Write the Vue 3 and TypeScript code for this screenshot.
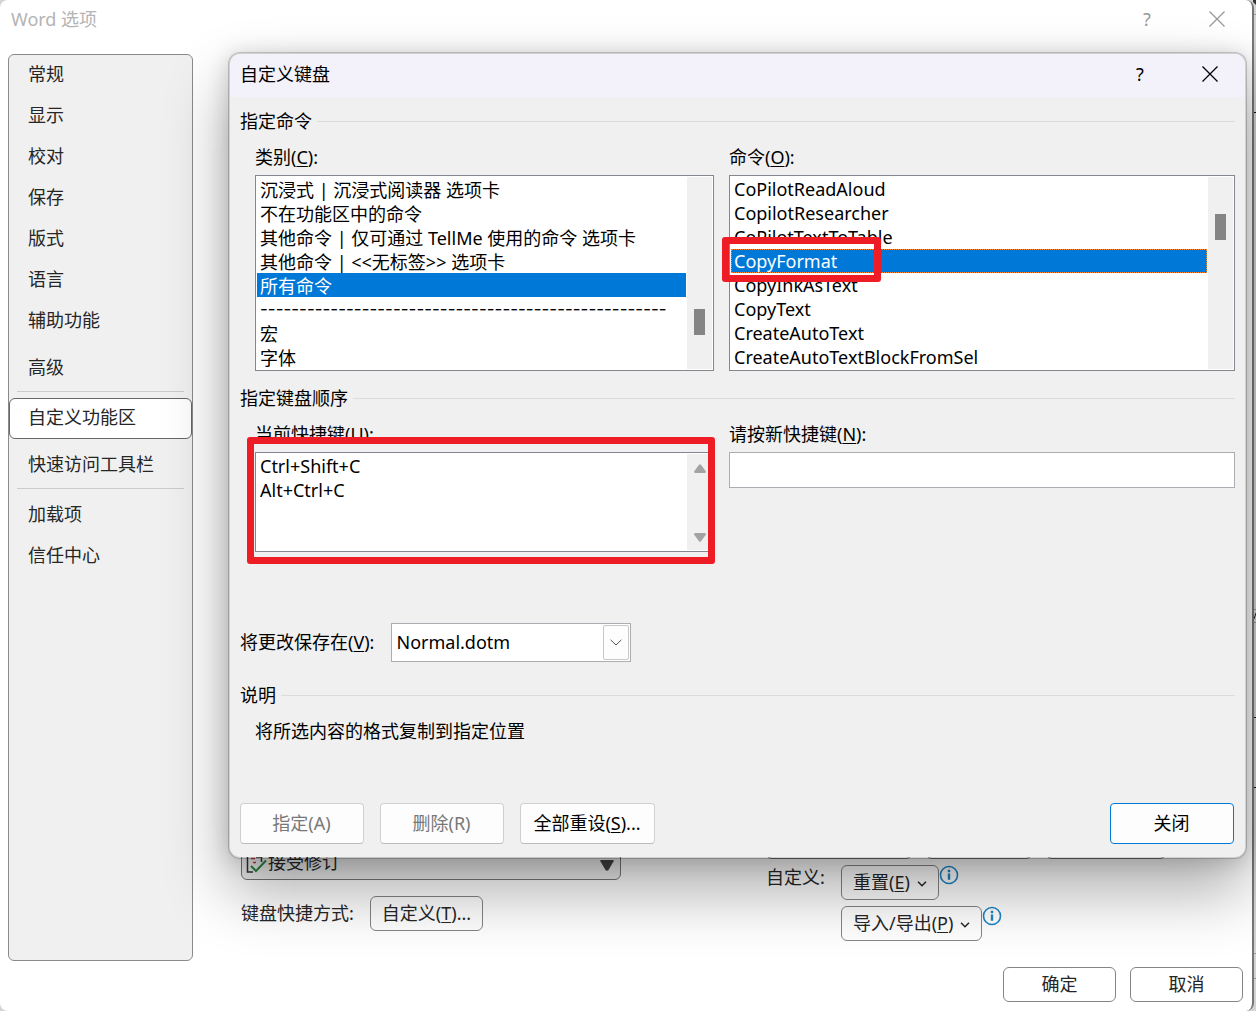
<script setup lang="ts">
import { ref } from 'vue'

interface NavItem {
  label: string
  active?: boolean
}

const navGroups: NavItem[][] = [
  [
    { label: '常规' },
    { label: '显示' },
    { label: '校对' },
    { label: '保存' },
    { label: '版式' },
    { label: '语言' },
    { label: '辅助功能' },
  ],
  [{ label: '高级' }],
  [{ label: '自定义功能区', active: true }],
  [{ label: '快速访问工具栏' }],
  [{ label: '加载项' }, { label: '信任中心' }],
]

const dashes = '-'.repeat(52)
const categories: string[] = [
  '沉浸式 | 沉浸式阅读器 选项卡',
  '不在功能区中的命令',
  '其他命令 | 仅可通过 TellMe 使用的命令 选项卡',
  '其他命令 | <<无标签>> 选项卡',
  '所有命令',
  dashes,
  '宏',
  '字体',
]
const commands: string[] = [
  'CoPilotReadAloud',
  'CopilotResearcher',
  'CoPilotTextToTable',
  'CopyFormat',
  'CopyInkAsText',
  'CopyText',
  'CreateAutoText',
  'CreateAutoTextBlockFromSel',
]
const shortcuts: string[] = ['Ctrl+Shift+C', 'Alt+Ctrl+C']

const category = ref('所有命令')
const command = ref('CopyFormat')
const shortcut = ref('')
const newShortcut = ref('')
const template = ref('Normal.dotm')
</script>

<template>
  <div class="desk">
    <!-- Edge of the document window behind the options window -->
    <svg class="desk-edge" width="3" height="1011" viewBox="0 0 3 1011" aria-hidden="true">
      <path d="M0 0h3v5l-3-3z" fill="#333" />
      <path d="M0 112.5h3M0 717.5h3M0 787.5h3" stroke="#111" />
      <path d="M0 14.500h3M0 609.5h3M0 622.5h3M0 953.5h3M0 978.5h3" stroke="#999" />
      <path d="M1 619l2-6" stroke="#222" />
    </svg>

    <section class="options" aria-label="Word 选项">
      <header class="options-title">
        <h1>Word 选项</h1>
        <button class="caption" type="button" aria-label="帮助">?</button>
        <button class="caption" type="button" aria-label="关闭">
          <svg width="16" height="16" viewBox="0 0 16 16"><path d="M.5.5l15 15M15.5.5l-15 15" /></svg>
        </button>
      </header>

      <div class="options-main">
        <nav class="sidebar">
          <ul v-for="(group, i) in navGroups" :key="i" :class="{ ruled: i === 2 || i === 4 }">
            <li v-for="item in group" :key="item.label">
              <button type="button" :class="{ active: item.active }">{{ item.label }}</button>
            </li>
          </ul>
        </nav>

        <div class="page">
          <div class="page-left">
            <div class="command-row">
              <svg class="accept" width="23" height="28" viewBox="0 0 23 28" fill="none">
                <path d="M8 24H2.500V2h9l5 5v7M11 9h5.500" stroke="#333" stroke-width="1.500" />
                <path d="M6 10.500h4M8 14.500h3" stroke="#d13438" stroke-width="1.500" />
                <path d="M6 18l5 5 10-10.500" stroke="#2c8a47" stroke-width="2" />
              </svg>
              <span>接受修订</span>
              <svg class="scroll-down" width="14" height="11" viewBox="0 0 14 11"><path d="M1 0h12q1 0 .6 1.200L8.500 10q-1.500 1.500-3 0L.4 1.200Q0 0 1 0z" fill="#444" /></svg>
            </div>
            <div class="key-row">
              <span>键盘快捷方式:</span>
              <button class="soft-btn" type="button">自定义(<u>T</u>)...</button>
            </div>
          </div>
          <div class="page-right">
            <div class="tab-actions" aria-hidden="true"><i></i><i></i><i></i></div>
            <div class="custom-row">
              <span class="custom-label">自定义:</span>
              <div class="custom-buttons">
                <div class="with-info">
                  <button class="soft-btn" type="button">
                    重置(<u>E</u>)
                    <svg width="10" height="6" viewBox="0 0 10 6"><path d="M1 .8l4 4 4-4" fill="none" stroke="currentColor" stroke-width="1.500" /></svg>
                  </button>
                  <svg class="info" width="20" height="20" viewBox="0 0 20 20"><circle cx="10" cy="10" r="8.500" /><path d="M10 4.800v2.400M10 8.600v6.200" /></svg>
                </div>
                <div class="with-info">
                  <button class="soft-btn" type="button">
                    导入/导出(<u>P</u>)
                    <svg width="10" height="6" viewBox="0 0 10 6"><path d="M1 .8l4 4 4-4" fill="none" stroke="currentColor" stroke-width="1.500" /></svg>
                  </button>
                  <svg class="info" width="20" height="20" viewBox="0 0 20 20"><circle cx="10" cy="10" r="8.500" /><path d="M10 4.800v2.400M10 8.600v6.200" /></svg>
                </div>
              </div>
            </div>
          </div>
        </div>
      </div>

      <footer class="options-footer">
        <button class="soft-btn" type="button">确定</button>
        <button class="soft-btn" type="button">取消</button>
      </footer>
    </section>

    <section class="dialog" role="dialog" aria-label="自定义键盘">
      <header class="dialog-title">
        <h2>自定义键盘</h2>
        <button class="caption" type="button" aria-label="帮助">?</button>
        <button class="caption" type="button" aria-label="关闭">
          <svg width="16" height="16" viewBox="0 0 16 16"><path d="M.5.5l15 15M15.5.5l-15 15" /></svg>
        </button>
      </header>

      <div class="dialog-body">
        <h3 class="legend">指定命令</h3>
        <div class="columns">
          <div class="field">
            <label for="category">类别(<u>C</u>):</label>
            <div class="listbox">
              <select id="category" v-model="category" size="8">
                <option v-for="c in categories" :key="c" :value="c" :class="{ dashes: c === dashes }">{{ c }}</option>
              </select>
              <div class="track low"><span class="thumb"></span></div>
            </div>
          </div>
          <div class="field">
            <label for="command">命令(<u>O</u>):</label>
            <div class="listbox">
              <select id="command" v-model="command" class="focused" size="8">
                <option v-for="c in commands" :key="c" :value="c">{{ c }}</option>
              </select>
              <div class="track high"><span class="thumb"></span></div>
              <span class="mark mark-command"></span>
            </div>
          </div>
        </div>

        <h3 class="legend second">指定键盘顺序</h3>
        <div class="columns">
          <div class="field">
            <label for="shortcuts">当前快捷键(<u>U</u>):</label>
            <div class="listbox short">
              <select id="shortcuts" v-model="shortcut" size="4">
                <option v-for="s in shortcuts" :key="s" :value="s">{{ s }}</option>
              </select>
              <div class="track arrows">
                <svg width="12" height="9" viewBox="0 0 12 9"><path d="M5 .8q1-1 2 0l4.600 6.200q.8 2-1 2H1.400q-1.800 0-1-2z" /></svg>
                <svg width="12" height="9" viewBox="0 0 12 9"><path d="M5 8.200q1 1 2 0L11.600 2q.8-2-1-2H1.400Q-.4 0 .4 2z" /></svg>
              </div>
              <span class="mark mark-shortcuts"></span>
            </div>
          </div>
          <div class="field">
            <label for="new-key">请按新快捷键(<u>N</u>):</label>
            <input id="new-key" v-model="newShortcut" type="text" />
          </div>
        </div>

        <div class="save-row">
          <label for="save-in">将更改保存在(<u>V</u>):</label>
          <div class="combo">
            <select id="save-in" v-model="template">
              <option>Normal.dotm</option>
            </select>
            <span class="combo-arrow">
              <svg width="12" height="7" viewBox="0 0 12 7"><path d="M.6.8L6 6 11.400.8" fill="none" stroke="#555" /></svg>
            </span>
          </div>
        </div>

        <h3 class="legend third">说明</h3>
        <p class="description">将所选内容的格式复制到指定位置</p>

        <div class="actions">
          <button type="button" disabled>指定(A)</button>
          <button type="button" disabled>删除(R)</button>
          <button type="button" class="wide">全部重设(<u>S</u>)...</button>
          <button type="button" class="primary">关闭</button>
        </div>
      </div>
    </section>
  </div>
</template>

<style>
body {
  margin: 0;
}
</style>

<style scoped>
.desk {
  position: relative;
  display: flex;
  min-height: 100vh;
  padding-right: 2px;
  box-sizing: border-box;
  overflow: hidden;
  background: #d4d4d4;
  color: #000;
  font: 18px/24px "Noto Sans", "Noto Sans CJK SC", sans-serif;
}
.desk *,
.desk *::before,
.desk *::after {
  box-sizing: border-box;
}
.desk-edge {
  position: absolute;
  top: 0;
  right: 0;
}
button,
input,
select {
  font: inherit;
  color: inherit;
  margin: 0;
}
h1,
h2,
h3,
p,
ul {
  margin: 0;
  padding: 0;
  font: inherit;
  list-style: none;
}
u {
  text-decoration-thickness: 1px;
  text-underline-offset: 2px;
}

/* Options window */
.options {
  position: relative;
  flex: 1;
  display: flex;
  flex-direction: column;
  padding-left: 8px;
  border-right: 2px solid #777;
  border-radius: 8px;
  background: #fff;
  color: #262626;
}
.options-title {
  display: flex;
  align-items: center;
  height: 38px;
  padding-left: 3px;
  color: #b4b4b4;
}
.options-title h1,
.dialog-title h2 {
  flex: 1;
}
.caption {
  display: grid;
  place-items: center;
  width: 70px;
  height: 38px;
  padding: 0;
  border: 0;
  background: none;
}
.caption svg {
  stroke: currentColor;
  stroke-width: 1.3;
}
.options-title .caption {
  color: #999;
}
.options-main {
  flex: 1;
  display: flex;
  margin-top: 16px;
}
.sidebar {
  width: 185px;
  border: 1px solid #8a8a8a;
  border-radius: 6px;
  background: #f0f0f0;
}
.sidebar ul + ul {
  margin-top: 6px;
}
.sidebar ul.ruled {
  margin-top: 2px;
}
.sidebar ul.ruled::before {
  content: "";
  display: block;
  height: 1px;
  margin: 0 8px 6px;
  background: #cbcbcb;
}
.sidebar button {
  display: block;
  width: 100%;
  height: 41px;
  padding: 0 18px 3px;
  border: 1px solid transparent;
  border-radius: 6px;
  background: none;
  text-align: left;
}
.sidebar button.active {
  border-color: #666;
  background: #fff;
}
.page {
  flex: 1;
  display: flex;
  align-items: flex-end;
  padding: 0 0 20px 48px;
}
.page-left {
  width: 380px;
  margin: 0 145px 10px 0;
}
.command-row {
  display: flex;
  align-items: center;
  height: 36px;
  padding: 0 6px 0 3px;
  border: 1px solid #777;
  border-radius: 6px;
  background: #f0f0f0;
}
.scroll-down {
  align-self: flex-end;
  margin: 0 0 8px auto;
}
.key-row {
  display: flex;
  align-items: center;
  gap: 16px;
  margin-top: 16px;
}
.key-row span {
  padding-bottom: 2px;
}
.soft-btn {
  height: 35px;
  padding: 0 11px 1px;
  border: 1px solid #858585;
  border-radius: 6px;
  background: none;
  white-space: nowrap;
}
.soft-btn svg {
  margin-left: 2px;
  vertical-align: middle;
}
.page-right {
  flex: 1;
}
.tab-actions {
  display: flex;
  gap: 14px;
}
.tab-actions i {
  width: 106px;
  height: 35px;
  border: 1px solid #858585;
  border-radius: 6px;
}
.tab-actions i:first-child {
  width: 146px;
}
.tab-actions i:last-child {
  width: 120px;
}
.custom-row {
  display: flex;
  margin-top: 6px;
}
.custom-label {
  width: 75px;
}
.custom-buttons {
  display: grid;
  gap: 6px;
}
.with-info {
  display: flex;
}
.info {
  fill: none;
  stroke: #1b87c9;
  stroke-width: 1.6;
}
.info path {
  stroke-width: 2.4;
}
.options-footer {
  display: flex;
  justify-content: flex-end;
  gap: 14px;
  padding: 6px 9px 9px;
}
.options-footer .soft-btn {
  width: 113px;
}

/* Keyboard dialog */
.dialog {
  position: absolute;
  top: 52px;
  left: 228px;
  right: 9px;
  border: 2px solid rgba(0, 0, 0, 0.18);
  border-radius: 12px;
  background: #f0f0f0;
  background-clip: padding-box;
  box-shadow: 0 32px 64px rgba(0, 0, 0, 0.33), 0 2px 21px rgba(0, 0, 0, 0.16);
}
.dialog-title {
  display: flex;
  align-items: center;
  height: 43px;
  padding: 0 0 3px 10px;
  border-radius: 10px 10px 0 0;
  background: #f3f1f9;
}
.dialog-body {
  padding: 12px 10px 13px;
}
.legend {
  display: flex;
  align-items: center;
  gap: 5px;
}
.legend::after {
  content: "";
  flex: 1;
  height: 1px;
  background: #dcdcdc;
}
.legend.second {
  margin-top: 15px;
}
.legend.third {
  margin-top: 21px;
}
.columns {
  display: grid;
  grid-template-columns: 459fr 506fr;
  gap: 15px;
  margin: 12px 0 0 15px;
}
.field label {
  display: block;
  margin-bottom: 6px;
}
.listbox {
  position: relative;
  display: flex;
  height: 196px;
  padding: 1px;
  border: 1px solid #828790;
  background: #fff;
}
.listbox.short {
  height: 100px;
}
.listbox select {
  flex: 1;
  min-width: 0;
  height: 100%;
  padding: 0;
  border: 0;
  border-radius: 0;
  outline: 0;
  background: #fff;
  overflow: hidden;
}
.listbox option {
  display: flex;
  align-items: center;
  height: 24px;
  min-height: 24px;
  padding: 0 3px;
  line-height: 24px;
}
.listbox option:checked {
  background: linear-gradient(#0078d7, #0078d7);
  -webkit-text-fill-color: #fff;
}
.listbox .focused option:checked {
  outline: 1px dotted #ff8728;
  outline-offset: -1px;
}
.listbox option.dashes {
  font-family: Inter, sans-serif;
  font-size: 17px;
}
.track {
  width: 25px;
  margin-left: 1px;
  background: #f0f0f0;
}
.track.low {
  padding-top: 132px;
}
.track.high {
  padding-top: 37px;
}
.thumb {
  display: block;
  width: 11px;
  height: 26px;
  margin-left: 7px;
  background: #858585;
}
.track.arrows {
  display: flex;
  flex-direction: column;
  justify-content: space-between;
  align-items: center;
  padding: 10px 0 8px;
  fill: #a3a3a3;
}
.mark {
  position: absolute;
  border: 7px solid #ee1c25;
  border-radius: 3px;
  pointer-events: none;
}
.mark-command {
  top: 61px;
  left: -8px;
  width: 159px;
  height: 45px;
}
.mark-shortcuts {
  inset: -16px -2px -13px -9px;
}
.field input {
  display: block;
  width: 100%;
  height: 36px;
  padding: 0 4px;
  border: 1px solid #abadb3;
  border-radius: 0;
  background: #fff;
}
.save-row {
  display: flex;
  align-items: center;
  gap: 17px;
  margin-top: 71px;
}
.save-row label {
  padding-bottom: 2px;
}
.combo {
  position: relative;
  width: 240px;
}
.combo select {
  display: block;
  width: 100%;
  height: 39px;
  padding: 0 32px 2px 4px;
  border: 1px solid #abadb3;
  border-radius: 0;
  background: #fff;
  appearance: none;
}
.combo-arrow {
  position: absolute;
  inset: 2px 2px 2px auto;
  display: grid;
  place-items: center;
  width: 26px;
  border: 1px solid #c8c8c8;
  border-radius: 2px;
  background: #fdfdfd;
  pointer-events: none;
}
.description {
  margin: 12px 0 0 15px;
}
.actions {
  display: flex;
  gap: 16px;
  margin-top: 60px;
  padding-right: 1px;
}
.actions button {
  width: 124px;
  height: 41px;
  padding: 0 1px 2px 0;
  border: 1px solid #d0d0d0;
  border-bottom-color: #bbb;
  border-radius: 4px;
  background: #fdfdfd;
}
.actions button:disabled {
  color: #787878;
}
.actions .wide {
  width: 135px;
}
.actions .primary {
  margin-left: auto;
  border-color: #0078d4;
}
</style>
